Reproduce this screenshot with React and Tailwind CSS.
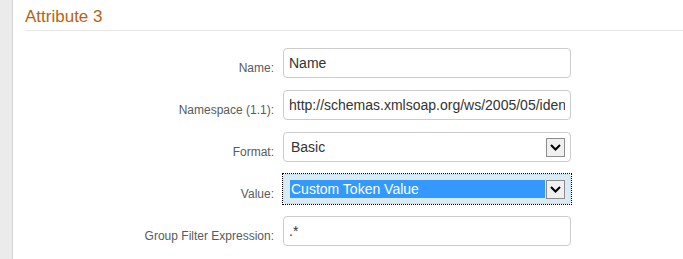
import React from 'react';

const font = { fontFamily: '"Liberation Sans", Arial, sans-serif' };

const Chevron = () => (
  <svg width="11" height="7" viewBox="0 0 11 7" aria-hidden="true">
    <polyline points="1,1 5.5,5.5 10,1" fill="none" stroke="#000" strokeWidth="2" />
  </svg>
);

const DropButton = () => (
  <div className="flex h-[19px] w-[19px] shrink-0 items-center justify-center border border-[#8b8b8b] bg-[#f0f0f0]">
    <Chevron />
  </div>
);

const Row = ({ label, children }) => (
  <div className="flex items-center">
    <div className="mt-[10px] w-[249px] text-right text-[12px] leading-[14px] text-[#5a5a5a]">{label}</div>
    <div className="ml-[9px] w-[288px]">{children}</div>
  </div>
);

const TextField = ({ value }) => (
  <input
    readOnly
    value={value}
    className="block h-[30px] w-full rounded-[4px] border border-[#cccccc] bg-white px-[5px] text-[14px] text-[#333] outline-none"
    style={font}
  />
);

const App = () => {
  return (
    <div className="flex h-[259px] w-[683px] bg-white" style={font}>
      {/* left gutter */}
      <div className="w-[13px] shrink-0 border-r border-[#d4d4d4] bg-[#ebebeb]" />

      <div className="flex-1 pl-[12px]">
        {/* Section header */}
        <div className="border-b border-[#e6e6e6] pt-[7px] pb-[3px]">
          <h2 className="text-[17px] leading-[20px] text-[#b8640f]">Attribute 3</h2>
        </div>

        {/* Form */}
        <div className="mt-[17px] flex flex-col gap-[12px]">
          <Row label="Name:">
            <TextField value="Name" />
          </Row>
          <Row label="Namespace (1.1):">
            <TextField value="http://schemas.xmlsoap.org/ws/2005/05/identity/claims/name" />
          </Row>
          <Row label="Format:">
            <div className="flex h-[30px] items-center rounded-[4px] border border-[#cccccc] bg-white pl-[7px] pr-[5px] text-[14px] text-[#333]">
              <span>Basic</span>
              <div className="ml-auto">
                <DropButton />
              </div>
            </div>
          </Row>
          <Row label="Value:">
            <div className="-m-px border border-dotted border-black">
              <div className="flex h-[30px] items-center rounded-[3px] border border-[#c9e2f0] bg-[#d9ecf6] pl-[6px] pr-[5px] text-[14px]">
                <span className="mr-px flex h-[18px] flex-1 items-center bg-[#3399ff] pl-px leading-[18px] text-white">
                  Custom Token Value
                </span>
                <DropButton />
              </div>
            </div>
          </Row>
          <Row label="Group Filter Expression:">
            <TextField value=".*" />
          </Row>
        </div>
      </div>
    </div>
  );
};

export default App;
